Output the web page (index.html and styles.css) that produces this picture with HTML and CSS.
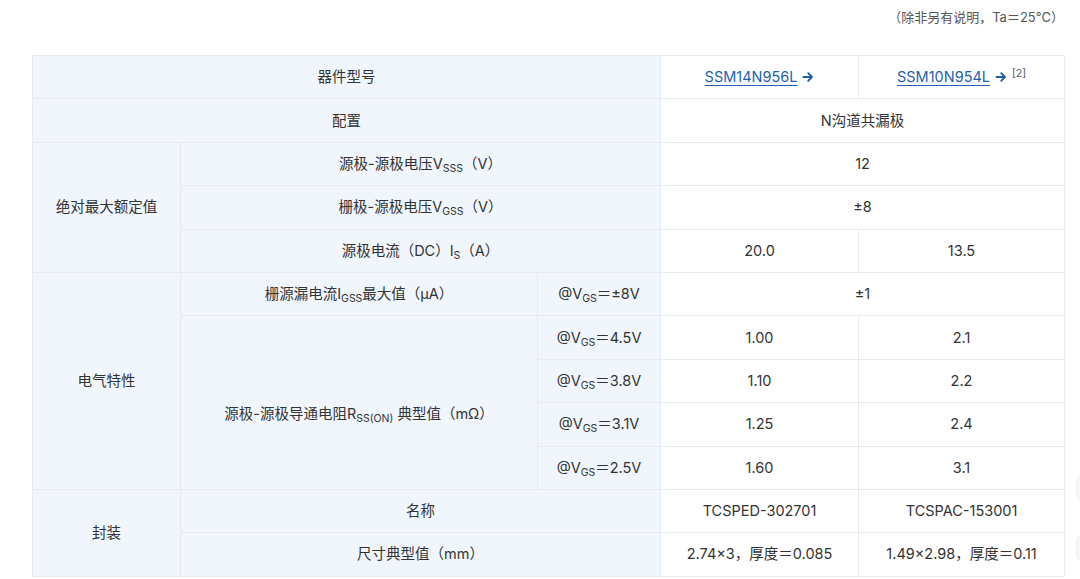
FILE: index.html
```html
<!DOCTYPE html>
<html lang="zh-CN">
<head>
<meta charset="utf-8">
<title>SSM14N956L / SSM10N954L</title>
<link rel="stylesheet" href="styles.css">
</head>
<body>
<div class="page">
  <div class="note">（除非另有说明，Ta＝25°C）</div>
  <table class="spec">
    <colgroup>
      <col class="c1"><col class="c2"><col class="c3"><col class="c4"><col class="c5">
    </colgroup>
    <tr>
      <td class="lab" colspan="3">器件型号</td>
      <td class="val"><a class="link" href="#">SSM14N956L</a><svg class="arr" viewBox="0 0 12 12" width="12" height="12"><path d="M1.5 6H10M6.2 2.2L10 6L6.2 9.8" fill="none" stroke="#1f5fae" stroke-width="1.9" stroke-linecap="round" stroke-linejoin="round"/></svg></td>
      <td class="val"><a class="link" href="#">SSM10N954L</a><svg class="arr" viewBox="0 0 12 12" width="12" height="12"><path d="M1.5 6H10M6.2 2.2L10 6L6.2 9.8" fill="none" stroke="#1f5fae" stroke-width="1.9" stroke-linecap="round" stroke-linejoin="round"/></svg><sup class="ref">[2]</sup></td>
    </tr>
    <tr>
      <td class="lab" colspan="3">配置</td>
      <td class="val" colspan="2">N沟道共漏极</td>
    </tr>
    <tr>
      <td class="lab" rowspan="3">绝对最大额定值</td>
      <td class="lab" colspan="2">源极-源极电压V<sub>SSS</sub>（V）</td>
      <td class="val" colspan="2">12</td>
    </tr>
    <tr>
      <td class="lab" colspan="2">栅极-源极电压V<sub>GSS</sub>（V）</td>
      <td class="val" colspan="2">±8</td>
    </tr>
    <tr>
      <td class="lab" colspan="2">源极电流（DC）I<sub>S</sub>（A）</td>
      <td class="val">20.0</td>
      <td class="val">13.5</td>
    </tr>
    <tr>
      <td class="lab" rowspan="5">电气特性</td>
      <td class="lab">栅源漏电流I<sub>GSS</sub>最大值（μA）</td>
      <td class="lab">@V<sub>GS</sub>＝±8V</td>
      <td class="val" colspan="2">±1</td>
    </tr>
    <tr>
      <td class="lab rss" rowspan="4">源极-源极导通电阻R<sub>SS(ON)</sub> 典型值（mΩ）</td>
      <td class="lab">@V<sub>GS</sub>＝4.5V</td>
      <td class="val">1.00</td>
      <td class="val">2.1</td>
    </tr>
    <tr>
      <td class="lab">@V<sub>GS</sub>＝3.8V</td>
      <td class="val">1.10</td>
      <td class="val">2.2</td>
    </tr>
    <tr>
      <td class="lab">@V<sub>GS</sub>＝3.1V</td>
      <td class="val">1.25</td>
      <td class="val">2.4</td>
    </tr>
    <tr>
      <td class="lab">@V<sub>GS</sub>＝2.5V</td>
      <td class="val">1.60</td>
      <td class="val">3.1</td>
    </tr>
    <tr>
      <td class="lab" rowspan="2">封装</td>
      <td class="lab" colspan="2">名称</td>
      <td class="val">TCSPED-302701</td>
      <td class="val">TCSPAC-153001</td>
    </tr>
    <tr>
      <td class="lab" colspan="2">尺寸典型值（mm）</td>
      <td class="val">2.74×3，厚度＝0.085</td>
      <td class="val">1.49×2.98，厚度＝0.11</td>
    </tr>
  </table>
</div>
<div class="edge">
  <div class="pill"></div>
  <div class="pill"></div>
</div>
</body>
</html>
```

FILE: styles.css
```css
html, body {
  margin: 0;
  padding: 0;
  background: #ffffff;
}
body {
  font-family: "Inter", "Noto Sans CJK SC", sans-serif;
  color: #333333;
  overflow: hidden;
}
.page {
  padding-left: 32px;
  width: 1032px;
}
.note {
  height: 55px;
  box-sizing: border-box;
  padding-top: 7px;
  text-align: right;
  font-size: 13px;
  color: #555555;
  line-height: 20px;
}
.spec {
  width: 1032px;
  border-collapse: collapse;
  table-layout: fixed;
  font-size: 14.5px;
}
.c1 { width: 148px; }
.c2 { width: 357px; }
.c3 { width: 123px; }
.c4 { width: 198px; }
.c5 { width: 206px; }
.spec td {
  height: 42.4px;
  padding: 0;
  text-align: center;
  vertical-align: middle;
  border: 1px solid #e7ebf1;
  line-height: 20px;
  white-space: nowrap;
}
.spec td.lab {
  background: #f1f6fd;
}
.spec td.val {
  background: #ffffff;
}
.spec td.rss {
  padding-top: 22px;
}
.spec sub {
  font-size: 10.5px;
  vertical-align: -3px;
  line-height: 0;
}
.link {
  color: #1f5fae;
  text-decoration: underline;
  text-decoration-color: #1f5fae;
  text-underline-offset: 3px;
}
.arr {
  display: inline-block;
  margin-left: 5px;
  vertical-align: -1px;
}
.ref {
  font-size: 10.5px;
  color: #555555;
  margin-left: 5px;
  vertical-align: 5px;
  line-height: 0;
}
.edge {
  position: absolute;
  left: 1076px;
  top: 474px;
  display: flex;
  flex-direction: column;
  gap: 32px;
}
.pill {
  width: 20px;
  height: 26px;
  border-radius: 8px;
  background: #f7f7f8;
  border: 1px solid #efeff1;
}
```
